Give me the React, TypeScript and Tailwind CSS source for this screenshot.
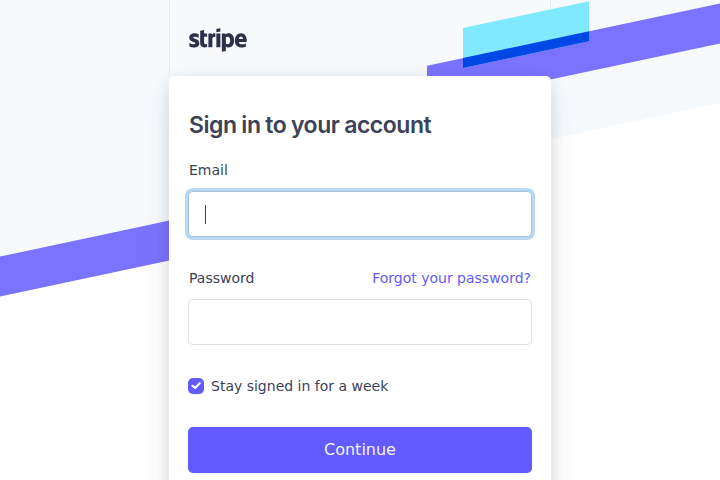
import { FaStripe } from "react-icons/fa";

function Backdrop() {
  return (
    <svg className="absolute inset-0" width="720" height="480" viewBox="0 0 720 480" aria-hidden="true">
      <polygon points="0,0 720,0 720,103.1 0,256.2" fill="#f6fafd" />
      <rect x="169" y="0" width="1" height="76" fill="#e6ebf0" />
      <rect x="550" y="0" width="1" height="76" fill="#e6ebf0" />
      <polygon points="0,256.6 180,218.3 180,258.3 0,296.6" fill="#7a73ff" />
      <polygon points="427,65.8 720,3.5 720,43.5 427,105.8" fill="#7a73ff" />
      <polygon points="463,28.1 589,1.3 589,41.3 463,68.1" fill="#80e9ff" />
      <polygon points="463,58.1 589,31.3 589,41.3 463,68.1" fill="#0048e5" />
    </svg>
  );
}

export default function App() {
  return (
    <div className="relative h-[480px] w-[720px] overflow-hidden bg-white font-['DejaVu_Sans',sans-serif] text-sm text-[#3c4257]">
      <Backdrop />
      <main className="relative mx-auto w-[382px]">
        <header className="flex h-[76px] items-start pl-5">
          <FaStripe className="mt-[17px] h-[46px] w-[58px] text-[#2d3048]" aria-label="stripe" />
        </header>
        <form className="flex h-[440px] flex-col rounded-[5px] bg-white px-[19px] pt-[33px] shadow-[0_15px_35px_0_rgba(60,66,87,0.08),0_5px_15px_0_rgba(0,0,0,0.12)]">
          <h1 className="pl-px font-['Inter',sans-serif] text-[23px] leading-8 font-semibold tracking-[-0.46px] [word-spacing:-0.6px] whitespace-nowrap">
            Sign in to your account
          </h1>
          <label className="mt-[19px] pl-px leading-5">Email</label>
          <div className="mt-[11px] flex h-[46px] items-center rounded-[5px] border border-[#9fc6e2] bg-white pl-4 shadow-[0_0_0_3px_#b8d9f1]">
            <span className="h-[19px] w-px bg-[#3c4257]" />
          </div>
          <div className="mt-[31px] flex justify-between pr-px pl-px leading-5">
            <label>Password</label>
            <a className="text-[#635bff]">Forgot your password?</a>
          </div>
          <div className="mt-[11px] h-[46px] shrink-0 rounded-[5px] border border-[#dfdfe3] bg-white" />
          <label className="mt-[31px] flex items-center gap-[7px] leading-5">
            <span className="flex size-4 items-center justify-center rounded-[5px] bg-[#635bff] shadow-[0_1px_1px_rgba(0,0,0,0.06)]">
              <svg width="10" height="8" viewBox="0 0 10 8" fill="none" stroke="white" strokeWidth="2.1" strokeLinecap="round" strokeLinejoin="round">
                <path d="M1.5 3.8 4.1 6 8.7 1.3" />
              </svg>
            </span>
            Stay signed in for a week
          </label>
          <button type="button" className="mt-[31px] h-[46px] shrink-0 rounded-[5px] bg-[#635bff] text-base text-white/95 shadow-[0_1px_1px_rgba(0,0,0,0.06)]">
            Continue
          </button>
        </form>
      </main>
    </div>
  );
}
